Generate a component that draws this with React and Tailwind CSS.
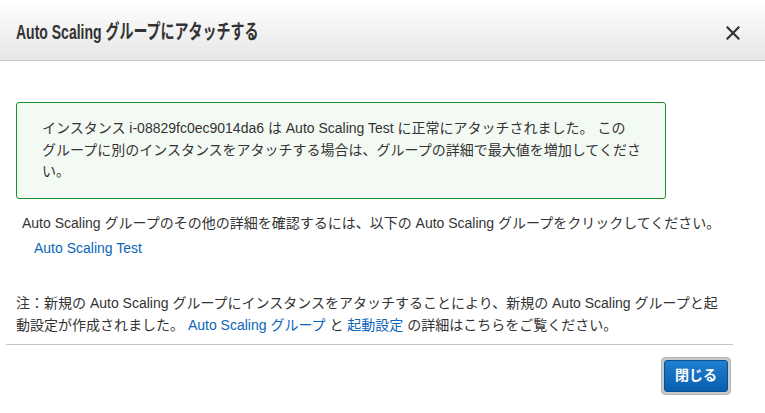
const jp = "font-['Liberation_Sans','Noto_Sans_CJK_JP',sans-serif]"

function CloseIcon() {
  return (
    <svg width="14" height="14" viewBox="0 0 14 14" className="text-[#333]">
      <path d="M1.5 1.5 L12.5 12.5 M12.5 1.5 L1.5 12.5" stroke="currentColor" strokeWidth="2.2" strokeLinecap="square" />
    </svg>
  )
}

export default function App() {
  return (
    <div className={`w-[765px] h-[413px] bg-white text-[#333] ${jp} overflow-hidden`}>
      {/* Header */}
      <div className="h-[61px] flex items-center justify-between pl-4 pr-[25px] bg-gradient-to-b from-white to-[#e6e6e6] border-b border-[#c8c8c8]">
        <h1 className="inline-block origin-left scale-x-[0.7] whitespace-nowrap text-[20px] font-bold text-[#333] pt-[4px]">
          Auto Scaling グループにアタッチする
        </h1>
        <button className="pt-[5px]">
          <CloseIcon />
        </button>
      </div>

      {/* Body */}
      <div className="px-4 pt-[41px] text-[14px]">
        <div className="w-[650px] border border-[#18922e] rounded-[3px] bg-[#f3faf4] pl-[25px] pr-2 py-[15px] leading-[21.5px] text-[#333] whitespace-nowrap">
          インスタンス i-08829fc0ec9014da6 は Auto Scaling Test に正常にアタッチされました。 この
          <br />
          グループに別のインスタンスをアタッチする場合は、グループの詳細で最大値を増加してくださ
          <br />
          い。
        </div>

        <p className="mt-[14px] pl-[6px] leading-[21px] whitespace-nowrap">
          Auto Scaling グループのその他の詳細を確認するには、以下の Auto Scaling グループをクリックしてください。
        </p>
        <a className="block mt-[4px] pl-[18px] leading-[21px] text-[#0b66b8]">Auto Scaling Test</a>

        <p className="mt-[33px] leading-[22px] whitespace-nowrap">
          注：新規の Auto Scaling グループにインスタンスをアタッチすることにより、新規の Auto Scaling グループと起
          <br />
          動設定が作成されました。 <a className="text-[#0b66b8]">Auto Scaling グループ</a> と{' '}
          <a className="text-[#0b66b8]">起動設定</a> の詳細はこちらをご覧ください。
        </p>
      </div>

      {/* Footer */}
      <div className="mx-[6px] mt-[8px] w-[727px] border-t border-[#c4c4c4]" />
      <div className="flex justify-end pr-[34px] pt-[12px]">
        <div className="p-[2px] rounded-[4px] bg-[#c9c9c9] border border-[#b3b3b3]">
          <button className="w-[64px] h-[32px] rounded-[3px] bg-gradient-to-b from-[#1f7fd0] to-[#0a5eae] border border-[#0a4f94] text-white font-bold text-[14px]">
            閉じる
          </button>
        </div>
      </div>
    </div>
  )
}
